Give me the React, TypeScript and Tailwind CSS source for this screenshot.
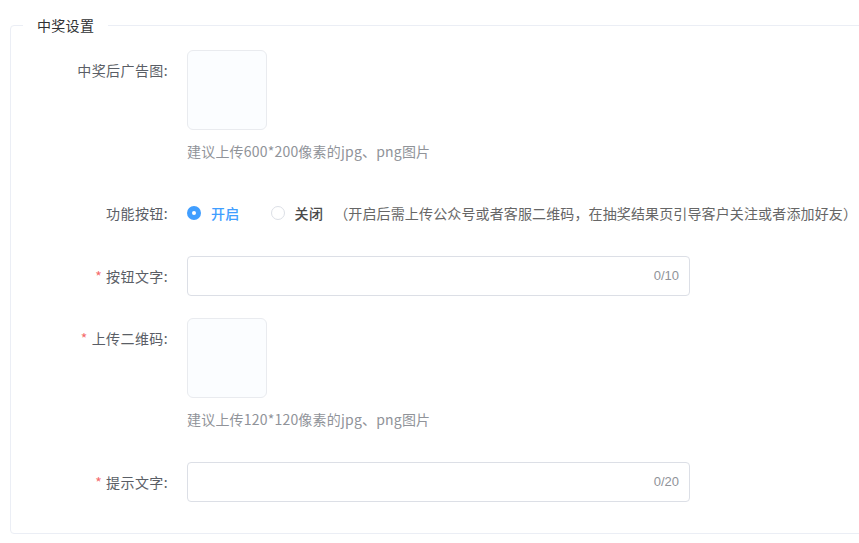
import React from "react";

const font = { fontFamily: '"Noto Sans CJK SC", "Noto Sans", sans-serif' };

function Label({ text, required }: { text: string; required?: boolean }) {
  return (
    <div className="w-[176px] shrink-0 pr-[19px] text-right text-[14px] leading-[40px] tracking-[0.4px] text-[#5a5e66]">
      {required && <span className="mr-[4px] text-[#f56c6c]">*</span>}
      {text}:
    </div>
  );
}

function UploadBox() {
  return <div className="h-[80px] w-[80px] rounded-[6px] border border-[#e9ebef] bg-[#fbfdff]" />;
}

function CountInput({ count }: { count: string }) {
  return (
    <div className="flex h-[40px] w-[503px] items-center justify-end rounded-[4px] border border-[#dcdfe6] bg-white pr-[10px] font-['Liberation_Sans',sans-serif] text-[13px] text-[#909399]">
      {count}
    </div>
  );
}

export default function App() {
  return (
    <div className="h-[543px] w-[859px] overflow-hidden bg-white" style={font}>
      <fieldset className="ml-[10px] mt-[15px] w-[900px] rounded-[4px] border border-[#ebeef5] pb-[31px] pt-[15px]">
        <legend className="ml-[12px] px-[14px] text-[14px] leading-[20px] tracking-[0.3px] text-[#303133]">中奖设置</legend>

        <div className="flex">
          <Label text="中奖后广告图" />
          <div>
            <UploadBox />
            <div className="mt-[10px] text-[14px] leading-[22px] tracking-[0.2px] text-[#909399]">建议上传600*200像素的jpg、png图片</div>
          </div>
        </div>

        <div className="mt-[31px] flex">
          <Label text="功能按钮" />
          <div className="flex h-[40px] items-center text-[14px]">
            <span className="flex h-[14px] w-[14px] items-center justify-center rounded-full bg-[#409eff]">
              <span className="h-[4px] w-[4px] rounded-full bg-white" />
            </span>
            <span className="ml-[10px] font-medium tracking-[0.3px] text-[#409eff]">开启</span>
            <span className="ml-[31px] h-[14px] w-[14px] rounded-full border border-[#dcdfe6] bg-white" />
            <span className="ml-[10px] font-medium tracking-[0.3px] text-[#4a4a4a]">关闭</span>
            <span className="ml-[11px] whitespace-nowrap tracking-[0.13px] text-[#666]">（开启后需上传公众号或者客服二维码，在抽奖结果页引导客户关注或者添加好友）</span>
          </div>
        </div>

        <div className="mt-[23px] flex">
          <Label text="按钮文字" required />
          <CountInput count="0/10" />
        </div>

        <div className="mt-[22px] flex">
          <Label text="上传二维码" required />
          <div>
            <UploadBox />
            <div className="mt-[10px] text-[14px] leading-[22px] tracking-[0.2px] text-[#909399]">建议上传120*120像素的jpg、png图片</div>
          </div>
        </div>

        <div className="mt-[32px] flex">
          <Label text="提示文字" required />
          <CountInput count="0/20" />
        </div>
      </fieldset>
    </div>
  );
}
